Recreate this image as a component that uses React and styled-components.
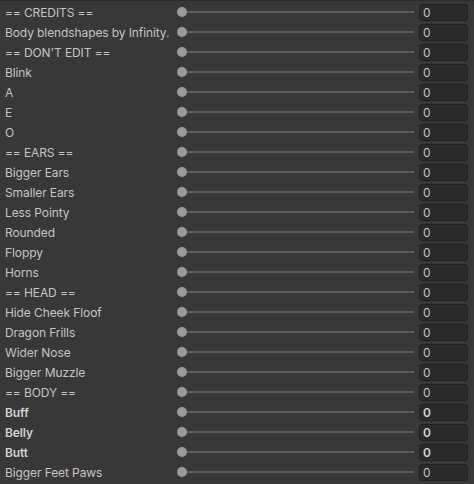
import styled, { createGlobalStyle } from "styled-components";

const GlobalStyle = createGlobalStyle`
  html, body {
    margin: 0;
    padding: 0;
    background: #383838;
  }
`;

const rows = [
  { name: "== CREDITS ==" },
  { name: "Body blendshapes by Infinity." },
  { name: "== DON'T EDIT ==" },
  { name: "Blink" },
  { name: "A" },
  { name: "E" },
  { name: "O" },
  { name: "== EARS ==" },
  { name: "Bigger Ears" },
  { name: "Smaller Ears" },
  { name: "Less Pointy" },
  { name: "Rounded" },
  { name: "Floppy" },
  { name: "Horns" },
  { name: "== HEAD ==" },
  { name: "Hide Cheek Floof" },
  { name: "Dragon Frills" },
  { name: "Wider Nose" },
  { name: "Bigger Muzzle" },
  { name: "== BODY ==" },
  { name: "Buff", bold: true },
  { name: "Belly", bold: true },
  { name: "Butt", bold: true },
  { name: "Bigger Feet Paws" },
];

const Panel = styled.div`
  width: 474px;
  height: 484px;
  overflow: hidden;
  background: #383838;
  border-top: 1px solid #2b2b2b;
  box-sizing: border-box;
  padding-top: 1px;
  font-family: Inter, "Noto Sans", sans-serif;
  font-size: 12px;
`;

const Row = styled.div`
  display: flex;
  align-items: center;
  height: 20px;
  padding-left: 5px;
  padding-right: 6px;
`;

const Label = styled.div`
  width: 172px;
  flex-shrink: 0;
  color: ${({ $bold }) => ($bold ? "#d2d2d2" : "#c4c4c4")};
  font-weight: ${({ $bold }) => ($bold ? 600 : 400)};
  letter-spacing: -0.1px;
  white-space: nowrap;
  overflow: hidden;
`;

const Slider = styled.div`
  flex: 1;
  position: relative;
  height: 20px;
  display: flex;
  align-items: center;
`;

const Track = styled.div`
  flex: 1;
  height: 2px;
  margin-left: 5px;
  background: #5e5e5e;
`;

const Knob = styled.div`
  position: absolute;
  left: 0;
  top: 5px;
  width: 10px;
  height: 10px;
  border-radius: 50%;
  background: #999999;
`;

const Field = styled.div`
  width: 49px;
  height: 17px;
  margin-left: 5px;
  box-sizing: border-box;
  background: #2a2a2a;
  border: 1px solid #212121;
  border-radius: 3px;
  color: ${({ $bold }) => ($bold ? "#d2d2d2" : "#c4c4c4")};
  font-weight: ${({ $bold }) => ($bold ? 600 : 400)};
  font-size: 12px;
  line-height: 15px;
  padding-left: 3px;
`;

export default function App() {
  return (
    <>
      <GlobalStyle />
      <Panel>
        {rows.map((r, i) => (
          <Row key={i}>
            <Label $bold={r.bold}>{r.name}</Label>
            <Slider>
              <Track />
              <Knob />
            </Slider>
            <Field $bold={r.bold}>0</Field>
          </Row>
        ))}
      </Panel>
    </>
  );
}
